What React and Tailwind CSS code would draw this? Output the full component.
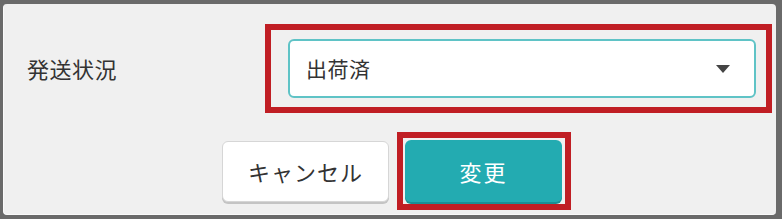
export default function App() {
  return (
    <div className="w-[782px] h-[219px] bg-[#6a6a6a] pt-[4px] pl-[3px] pr-[6px] pb-[4px] font-['Noto_Sans_CJK_JP','Noto_Sans',sans-serif]">
      <div className="h-full rounded-[4px] bg-[#f0f0f0] border-l border-b border-[#fafafa] flex flex-col">
        <div className="flex items-center mt-[20px]">
          <span className="ml-[23px] w-[238px] text-[22px] tracking-[0.5px] text-[#333]">発送状況</span>
          <div className="w-[507px] h-[89px] border-[6px] border-[#c01e24] pl-[17px] pr-[10px] pt-[9px] pb-[9px]">
            <div className="h-full bg-white border-2 border-[#5fc3c6] rounded-[6px] flex items-center justify-between pl-[16px] pr-[24px]">
              <span className="text-[21px] tracking-[0.5px] text-[#333]">出荷済</span>
              <svg width="14" height="8" viewBox="0 0 14 8" className="text-[#444]">
                <path d="M0 0 H14 L7 8 Z" fill="currentColor" />
              </svg>
            </div>
          </div>
        </div>
        <div className="flex items-center mt-[19px] ml-[218px]">
          <button
            type="button"
            className="w-[167px] h-[61px] bg-white border border-[#d6d6d6] rounded-[6px] shadow-[0_2px_0_#c4c4c4] text-[22px] tracking-[1px] text-[#333]"
          >
            キャンセル
          </button>
          <div className="ml-[8px] w-[174px] h-[78px] border-[6px] border-[#c01e24] pl-[2px] pr-[3px] pt-[2px] pb-[2px]">
            <button
              type="button"
              className="w-full h-full bg-[#23abb1] rounded-[6px] shadow-[0_2px_0_#1a8f94] text-[22px] tracking-[2px] text-white"
            >
              変更
            </button>
          </div>
        </div>
      </div>
    </div>
  );
}
